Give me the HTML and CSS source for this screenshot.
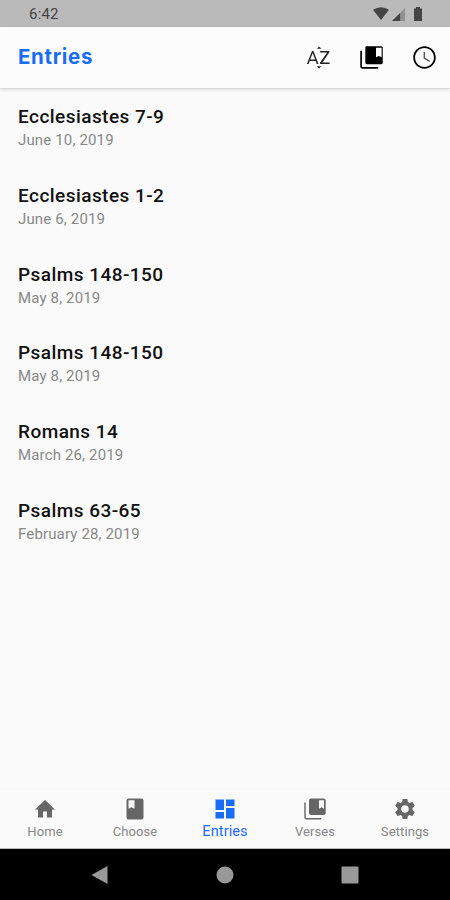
FILE: index.html
```html
<!DOCTYPE html>
<html lang="en">
<head>
  <meta charset="UTF-8">
  <title>Entries</title>
  <link rel="stylesheet" href="styles.css">
</head>
<body>

<div class="status">
  <span class="time">6:42</span>
  <svg class="wifi" viewBox="0 0 16 13"><path d="M0 2.8Q8-2.4 16 2.8L8 13z"/></svg>
  <svg class="signal" viewBox="0 0 12 12"><path opacity=".35" d="M12 0v12H0z"/><path d="M7.5 4.5V12H0z"/></svg>
  <svg class="battery" viewBox="0 0 8 14"><path d="M2 1.5V0h4v1.5h2V14H0V1.5z"/></svg>
</div>

<header class="header">
  <h1>Entries</h1>
  <div class="actions">
    <svg class="sort" viewBox="0 0 24 24"><path d="M14.500 4.200h-3.900l1.950-1.950zm-3.900 15.600h3.900l-1.950 1.950zM6.2 6.270L1.700 17.730h1.500l.98-2.600h5.300l.98 2.600h1.500L7.500 6.270H6.200zm-1.550 7.600l2.200-5.900 2.200 5.900h-4.400zM15.500 16.480h6.350v1.250h-8.500v-1.100l6.300-9.100h-6.200V6.270h8.200v1.100z"/></svg>
    <svg viewBox="0 0 24 24"><path fill-rule="evenodd" d="M3.500 6H2v14c0 1.1.9 2 2 2h14v-1.500H3.500V6zM20.500 2H8c-1.100 0-1.500.6-1.500 1.500v13c0 1 .6 1.500 1.500 1.500h12.500c1 0 1.500-.6 1.500-1.500v-13c0-.9-.5-1.500-1.500-1.500zM21 11.800l-2.500-1.200-2.500 1.200V3.300h5v8.500z"/></svg>
    <svg viewBox="0 0 24 24"><path d="M11.990 2C6.470 2 2 6.480 2 12s4.470 10 9.990 10C17.520 22 22 17.520 22 12S17.520 2 11.990 2zM12 20.400c-4.640 0-8.400-3.760-8.400-8.400s3.760-8.400 8.400-8.400 8.400 3.760 8.400 8.400-3.760 8.400-8.400 8.400z"/><path class="hands" d="M12.500 7H11.200v5.800l5 3.100.65-1.050-4.350-2.650z"/></svg>
  </div>
</header>

<main class="list">
  <div class="entry"><h2>Ecclesiastes 7-9</h2><p>June 10, 2019</p></div>
  <div class="entry"><h2>Ecclesiastes 1-2</h2><p>June 6, 2019</p></div>
  <div class="entry"><h2>Psalms 148-150</h2><p>May 8, 2019</p></div>
  <div class="entry"><h2>Psalms 148-150</h2><p>May 8, 2019</p></div>
  <div class="entry"><h2>Romans 14</h2><p>March 26, 2019</p></div>
  <div class="entry"><h2>Psalms 63-65</h2><p>February 28, 2019</p></div>
</main>

<nav class="tabs">
  <a class="tab">
    <svg viewBox="0 0 24 24"><path d="M10 20.500v-6h4v6h5v-8h3L12 3 2 12.500h3v8z"/></svg>
    <span>Home</span>
  </a>
  <a class="tab">
    <svg viewBox="0 0 24 24"><path fill-rule="evenodd" d="M18.500 1.500h-13C4.400 1.500 3.500 2.400 3.500 3.500v17c0 1.100.9 2 2 2h13c1.100 0 2-.9 2-2v-17c0-1.100-.9-2-2-2zM5.500 3.300h6v8.500l-3-1.600-3 1.600V3.300z"/></svg>
    <span>Choose</span>
  </a>
  <a class="tab active">
    <svg viewBox="0 0 24 24"><path d="M2.500 13h8.500V2.500H2.500v10.500zm0 8.500h8.500v-6.500H2.500v6.500zm10.500 0h8.500V11h-8.500v10.500zm0-19v6.500h8.500v-6.500h-8.500z"/></svg>
    <span>Entries</span>
  </a>
  <a class="tab">
    <svg viewBox="0 0 24 24"><path fill-rule="evenodd" d="M2.700 5.500H1.300v15c0 1.100.9 2 2 2h15v-1.400H2.700V5.500zM20.700 1.500H8c-1.100 0-2 .9-2 2v12.500c0 1.100.9 2 2 2h12.700c1.100 0 2-.9 2-2V3.500c0-1.100-.9-2-2-2zm.3 10.300l-2.500-1.600-2.500 1.600V3.300h5v8.500z"/></svg>
    <span>Verses</span>
  </a>
  <a class="tab">
    <svg viewBox="0 0 24 24"><path d="M19.430 12.980c.04-.32.070-.64.070-.98s-.03-.66-.07-.98l2.110-1.650c.19-.15.240-.42.120-.64l-2-3.460c-.12-.22-.39-.3-.61-.22l-2.490 1c-.52-.4-1.080-.73-1.690-.98l-.38-2.650C14.460 2.180 14.250 2 14 2h-4c-.25 0-.46.180-.49.420l-.38 2.650c-.61.250-1.170.590-1.690.98l-2.490-1c-.23-.09-.49 0-.61.220l-2 3.460c-.13.220-.07.490.120.640l2.110 1.650c-.04.320-.07.650-.07.980s.03.660.070.980l-2.110 1.650c-.19.150-.24.420-.12.640l2 3.460c.12.220.390.300.610.220l2.490-1c.52.400 1.080.730 1.690.980l.38 2.650c.03.240.240.420.490.420h4c.25 0 .46-.18.490-.42l.38-2.650c.61-.25 1.170-.59 1.690-.98l2.490 1c.23.090.490 0 .61-.22l2-3.460c.12-.22.070-.49-.12-.64l-2.110-1.650zM12 15.800c-2.100 0-3.800-1.700-3.800-3.800s1.700-3.800 3.800-3.800 3.800 1.700 3.800 3.800-1.700 3.800-3.800 3.800z"/></svg>
    <span>Settings</span>
  </a>
</nav>

<div class="system-nav">
  <svg viewBox="0 0 18 18"><path d="M17.500 0v18L1.500 9z"/></svg>
  <svg viewBox="0 0 18 18"><circle cx="9" cy="9" r="8.500"/></svg>
  <svg viewBox="0 0 18 18"><rect x=".5" y=".5" width="17" height="17" rx="1"/></svg>
</div>

</body>
</html>
```

FILE: styles.css
```css
* { box-sizing: border-box; }
body { margin: 0; height: 900px; display: flex; flex-direction: column; background: #fafafa; font-family: Roboto, sans-serif; overflow: hidden; }
h1, h2, p { margin: 0; }
svg { display: block; fill: currentColor; }

.status { height: 27px; padding: 0 28px 0 29px; display: flex; align-items: center; background: #bababa; color: #444; flex: none; }
.time { margin-right: auto; font-size: 15px; line-height: 26px; padding-top: 1px; letter-spacing: 0.2px; }
.wifi { width: 16px; height: 13px; }
.signal { width: 13px; height: 13px; margin: 1px 0 0 3px; }
.battery { width: 8px; height: 14px; margin-left: 9px; }

.header { height: 62px; padding: 0 12px 0 18px; display: flex; align-items: center; justify-content: space-between; background: #fcfcfc; border-bottom: 1px solid #dcdcdc; box-shadow: 0 1px 3px rgba(0, 0, 0, 0.12); flex: none; }
.header h1 { font-family: Inter, sans-serif; font-size: 20.5px; font-weight: 700; line-height: 28px; letter-spacing: 0.65px; padding-bottom: 2px; color: #1a6cf5; }
.actions { display: flex; gap: 26px; color: #000; }
.actions svg { width: 27px; height: 27px; }
.sort { color: #222; }
.hands { fill: #555; }

.list { flex: 1; padding: 16px 18px 0; }
.entry { height: 78.75px; }
.entry h2 { font-size: 19px; font-weight: 500; line-height: 24px; letter-spacing: 0.45px; color: #111; }
.entry p { font-size: 15px; line-height: 20px; padding-top: 1px; letter-spacing: 0.15px; color: #888; }

.tabs { height: 61px; display: flex; border-top: 1px solid #f6f6f6; border-bottom: 1px solid #bbb; flex: none; }
.tab { flex: 1; display: flex; flex-direction: column; align-items: center; padding-top: 8px; color: #666; }
.tab svg { width: 24px; height: 24px; }
.tab span { font-size: 13px; font-weight: 400; line-height: 16px; margin-top: 3px; letter-spacing: 0.1px; color: #868686; }
.tab.active, .tab.active span { color: #1a6cf5; }
.tab.active span { font-size: 14.5px; }

.system-nav { height: 51px; padding: 0 91px 0 90px; display: flex; align-items: center; justify-content: space-between; background: #000; color: #999; flex: none; }
.system-nav svg { width: 18px; height: 18px; }
```
